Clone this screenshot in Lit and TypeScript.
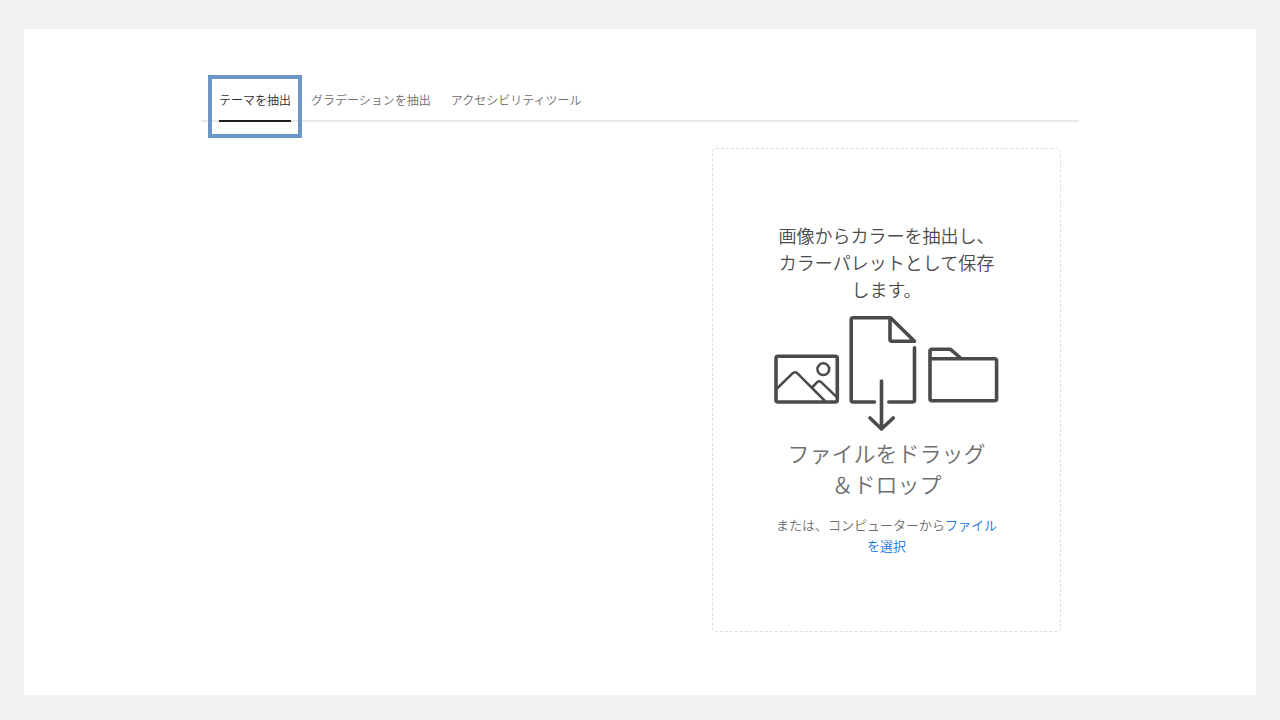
import { LitElement, html, css } from "lit";
import { customElement, state } from "lit/decorators.js";

const TABS = ["テーマを抽出", "グラデーションを抽出", "アクセシビリティツール"];

@customElement("drop-zone")
class DropZone extends LitElement {
  static styles = css`
    :host {
      display: block;
    }
    .zone {
      box-sizing: border-box;
      display: flex;
      flex-direction: column;
      align-items: center;
      padding: 73px 60px 75px;
      border: 1px dashed #dedede;
      border-radius: 4px;
      text-align: center;
    }
    .lead,
    .drag,
    .choose {
      margin: 0;
      font-weight: 350;
    }
    .lead {
      font-size: 18px;
      line-height: 27px;
      color: #4b4b4b;
    }
    .art {
      display: block;
      margin: 13px 0 5px;
    }
    .drag {
      font-size: 22px;
      line-height: 31px;
      color: #6e6e6e;
    }
    .choose {
      margin-top: 15px;
      font-size: 13px;
      line-height: 21px;
      color: #6e6e6e;
    }
    .link {
      color: #1473e6;
      text-decoration: none;
    }
  `;

  render() {
    return html`
      <section class="zone">
        <h2 class="lead">画像からカラーを抽出し、<br />カラーパレットとして保存<br />します。</h2>
        <svg class="art" width="226" height="116" viewBox="774 316 226 116" fill="none"
          stroke="#4b4b4b" stroke-width="3.6" stroke-linecap="round" stroke-linejoin="round" aria-hidden="true">
          <rect x="776" y="356.2" width="61.3" height="45.8" rx="2" />
          <g stroke-width="2.5">
            <path d="M777 388.5 792.8 373.2Q795 371.3 797.2 373.2L824.5 400.5" />
            <path d="M812 387.5 817.2 382.2Q819.2 380.4 821.2 382.2L836.5 396.8" />
            <circle cx="823.3" cy="369.2" r="5.9" />
          </g>
          <path d="M874.5 402H853.2Q851.2 402 851.2 400V319.8Q851.2 317.8 853.2 317.8H890.5L914.5 341.2H892Q890 341.2 890 339.2V318.5M914.5 347.8V400Q914.5 402 912.5 402H888.8" />
          <path d="M881.5 381V429M870 418 881.5 429 893.2 418" />
          <path d="M930 358.7V351.3Q930 349.3 932 349.3H950.5L960 357.5M930 358.7H994.6Q996.6 358.7 996.6 360.7V398.7Q996.6 400.7 994.6 400.7H932Q930 400.7 930 398.7Z" />
        </svg>
        <p class="drag">ファイルをドラッグ<br />＆ドロップ</p>
        <p class="choose">または、コンピューターから<a class="link" href="#">ファイル<br />を選択</a></p>
      </section>
    `;
  }
}

@customElement("app-root")
class AppRoot extends LitElement {
  @state() private active = 0;

  static styles = css`
    :host {
      display: block;
      box-sizing: border-box;
      min-height: 100vh;
      padding: 29px 24px 25px;
      background: #f1f1f1;
      font-family: "Noto Sans CJK JP", "Noto Sans", sans-serif;
      font-weight: 350;
    }
    .page {
      box-sizing: border-box;
      min-height: calc(100vh - 54px);
      padding: 60px 24px;
      background: #fff;
    }
    .content {
      max-width: 878px;
      margin: 0 auto;
    }
    .tabs {
      display: flex;
      gap: 20px;
      padding: 0 18px;
      border-bottom: 2px solid #e9e9e9;
    }
    .tab {
      position: relative;
      margin: 0 0 -2px;
      padding: 0 0 9px;
      border: 0;
      border-bottom: 2px solid transparent;
      background: none;
      font: inherit;
      font-size: 12px;
      line-height: 22px;
      color: #6e6e6e;
      cursor: pointer;
    }
    .tab[aria-selected="true"] {
      border-bottom-color: #1e1e1e;
      color: #2c2c2c;
    }
    .tab[aria-selected="true"]::after {
      content: "";
      position: absolute;
      inset: -14px -11px -18px;
      border: 4px solid #6c96c8;
    }
    .panel {
      display: flex;
      justify-content: flex-end;
      padding: 26px 18px 0;
    }
    .drop {
      flex: 0 1 349px;
    }
  `;

  render() {
    return html`
      <main class="page">
        <div class="content">
          <div class="tabs" role="tablist">
            ${TABS.map(
              (label, i) => html`<button class="tab" role="tab" aria-selected=${i === this.active ? "true" : "false"}
                @click=${() => (this.active = i)}>${label}</button>`
            )}
          </div>
          <div class="panel" role="tabpanel">
            <drop-zone class="drop"></drop-zone>
          </div>
        </div>
      </main>
    `;
  }
}
